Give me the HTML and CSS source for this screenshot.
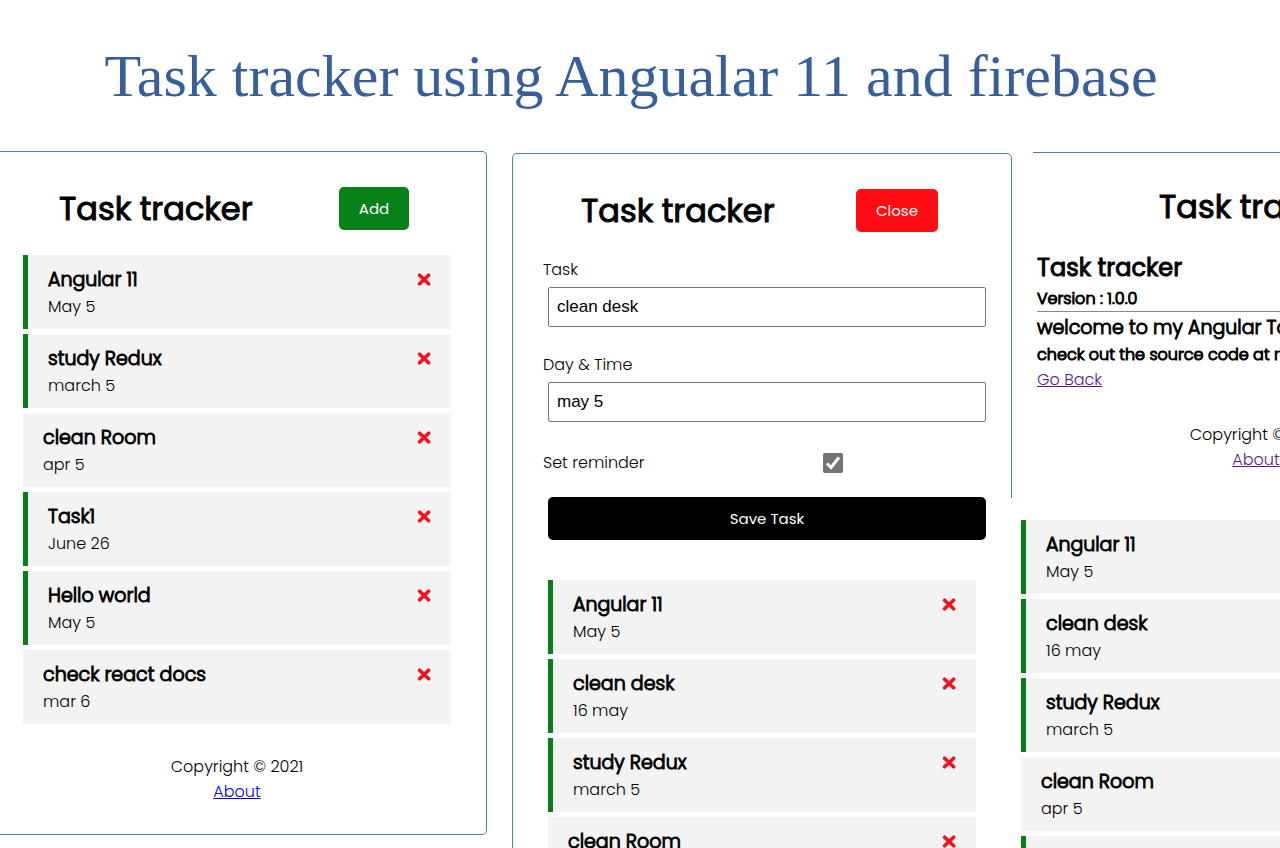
FILE: index.html
```html
<!DOCTYPE html>
<html lang="en">
<head>
<meta charset="utf-8">
<meta name="viewport" content="width=device-width, initial-scale=1">
<title>Task tracker using Angualar 11 and firebase</title>
<link rel="stylesheet" href="styles.css">
</head>
<body>
<svg class="sprite" aria-hidden="true">
  <symbol id="times" viewBox="0 0 14 13"><path d="M2.600 2.200 11.600 10.800M11.600 2.200 2.600 10.800" fill="none" stroke="#f5101b" stroke-width="3.600" stroke-linecap="round"/></symbol>
</svg>
<h1 class="banner">Task tracker using Angualar 11 and firebase</h1>
<main class="screens">
  <section class="card card-list">
    <header class="card-header">
      <h2 class="title">Task tracker</h2>
      <button class="btn btn-add" type="button">Add</button>
    </header>
    <ul class="tasks">
      <li class="task reminder"><h3>Angular 11</h3><p>May 5</p><button class="delete" type="button" aria-label="Delete"><svg><use href="#times"/></svg></button></li>
      <li class="task reminder"><h3>study Redux</h3><p>march 5</p><button class="delete" type="button" aria-label="Delete"><svg><use href="#times"/></svg></button></li>
      <li class="task"><h3>clean Room</h3><p>apr 5</p><button class="delete" type="button" aria-label="Delete"><svg><use href="#times"/></svg></button></li>
      <li class="task reminder"><h3>Task1</h3><p>June 26</p><button class="delete" type="button" aria-label="Delete"><svg><use href="#times"/></svg></button></li>
      <li class="task reminder"><h3>Hello world</h3><p>May 5</p><button class="delete" type="button" aria-label="Delete"><svg><use href="#times"/></svg></button></li>
      <li class="task"><h3>check react docs</h3><p>mar 6</p><button class="delete" type="button" aria-label="Delete"><svg><use href="#times"/></svg></button></li>
    </ul>
    <footer class="footer"><p>Copyright © 2021</p><a href="#about">About</a></footer>
  </section>

  <section class="card card-form">
    <header class="card-header">
      <h2 class="title">Task tracker</h2>
      <button class="btn btn-close" type="button">Close</button>
    </header>
    <form class="form">
      <div class="field"><label for="task">Task</label><input id="task" type="text" value="clean desk"></div>
      <div class="field"><label for="day">Day &amp; Time</label><input id="day" type="text" value="may 5"></div>
      <div class="check-field"><label for="remind">Set reminder</label><span class="check"><input id="remind" type="checkbox" checked><svg viewBox="0 0 20 20" aria-hidden="true"><path d="M4 10.500 8 14.500 16 4.500" fill="none" stroke="#fff" stroke-width="3"/></svg></span></div>
      <button class="btn btn-save" type="button">Save Task</button>
    </form>
    <ul class="tasks">
      <li class="task reminder"><h3>Angular 11</h3><p>May 5</p><button class="delete" type="button" aria-label="Delete"><svg><use href="#times"/></svg></button></li>
      <li class="task reminder"><h3>clean desk</h3><p>16 may</p><button class="delete" type="button" aria-label="Delete"><svg><use href="#times"/></svg></button></li>
      <li class="task reminder"><h3>study Redux</h3><p>march 5</p><button class="delete" type="button" aria-label="Delete"><svg><use href="#times"/></svg></button></li>
      <li class="task"><h3>clean Room</h3><p>apr 5</p><button class="delete" type="button" aria-label="Delete"><svg><use href="#times"/></svg></button></li>
    </ul>
  </section>

  <div class="side">
    <section class="about">
      <h2 class="title">Task tracker</h2>
      <div class="about-text">
        <h3 class="about-name">Task tracker</h3>
        <h5>Version : 1.0.0</h5>
        <hr>
        <h4>welcome to my Angular Task tracker</h4>
        <h5>check out the source code at my github</h5>
        <a class="visited" href="#back">Go Back</a>
      </div>
      <footer class="footer"><p>Copyright © 2021</p><a class="visited" href="#about">About</a></footer>
    </section>
    <section class="more">
      <ul class="tasks">
        <li class="task reminder"><h3>Angular 11</h3><p>May 5</p></li>
        <li class="task reminder"><h3>clean desk</h3><p>16 may</p></li>
        <li class="task reminder"><h3>study Redux</h3><p>march 5</p></li>
        <li class="task"><h3>clean Room</h3><p>apr 5</p></li>
        <li class="task reminder"><h3>Task1</h3><p>June 26</p></li>
      </ul>
    </section>
  </div>
</main>
</body>
</html>
```
FILE: styles.css
```css
* { box-sizing: border-box; margin: 0; padding: 0; }
body {
  height: 100vh;
  overflow: hidden;
  background: #fff;
  color: #000;
  font: 16px/25px Poppins, Inter, sans-serif;
  font-weight: 300;
}
.sprite { position: absolute; width: 0; height: 0; }
.banner {
  padding: 41px 18px 40px 0;
  color: #365f9b;
  font: 60px/70px "Liberation Serif", serif;
  text-align: center;
  white-space: nowrap;
}
.screens {
  display: grid;
  grid-template-columns: 487fr 25fr 500fr 268fr;
  align-items: start;
}
.card { border: 1px solid #4a7fa8; border-radius: 5px; }
.card-list { border-left: 0; border-radius: 0 5px 5px 0; padding: 35px 35px 30px 23px; }
.card-form { grid-column: 3; margin-top: 2px; padding: 35px 25px 30px 30px; }
.card-header { display: flex; align-items: center; justify-content: space-between; height: 43px; }
.card-list .card-header { padding: 0 42px 0 36px; margin-bottom: 25px; }
.card-form .card-header { padding: 0 48px 0 38px; margin-bottom: 25px; }
.title, .task h3, .about-name, .about h4, .about h5 {
  font-weight: 300;
  -webkit-text-stroke: 1px #000;
}
.title, .about-name { font-weight: 400; }
.title { font-size: 32px; line-height: 48px; }
.btn {
  height: 43px;
  border: 0;
  border-radius: 5px;
  color: #fff;
  font: inherit;
  font-weight: 400;
  font-size: 15px;
}
.btn-add { width: 70px; background: #088018; }
.btn-close { width: 82px; background: #ff0c15; }
.btn-save { display: block; width: calc(100% - 5px); margin-left: 5px; background: #000; }

.tasks { list-style: none; display: grid; gap: 5px; }
.task { position: relative; padding: 10px 20px; background: #f3f3f3; }
.reminder { border-left: 5px solid #088018; }
.task h3 { font-size: 19px; line-height: 29px; }
.delete {
  position: absolute;
  top: 18px;
  right: 20px;
  width: 14px;
  height: 13px;
  border: 0;
  background: none;
}
.delete svg { display: block; width: 14px; height: 13px; }
.card-form .tasks { margin: 40px 10px 0 5px; }

.field { margin-bottom: 25px; }
.field label { display: block; margin-bottom: 5px; }
.field input {
  display: block;
  width: calc(100% - 5px);
  height: 40px;
  margin-left: 5px;
  padding: 0 8px;
  border: 1px solid #767676;
  border-radius: 2px;
  color: #000;
  font: 17px "Liberation Sans", sans-serif;
}
.check-field {
  display: grid;
  grid-template-columns: 1fr 2fr;
  align-items: center;
  margin: 28px 0 22px;
  padding-right: 8px;
}
.check { display: grid; justify-self: center; width: 20px; height: 20px; }
.check input, .check svg { grid-area: 1 / 1; width: 20px; height: 20px; }
.check input { appearance: none; border-radius: 2px; background: #747474; }
.check svg { pointer-events: none; z-index: 1; }

.footer { margin-top: 30px; text-align: center; }
a { color: #0000ee; }
.visited { color: #551a8b; }

.side { min-width: 0; overflow: hidden; margin-left: -1px; padding-top: 1px; }
.about { width: 460px; margin-left: 22px; padding: 30px 0 26px 4px; border-top: 1px solid #4a7fa8; }
.about .title { padding-left: 122px; }
.about-text { margin-top: 19px; white-space: nowrap; }
.about-name { font-size: 24px; line-height: 36px; }
.about h4 { font-size: 19px; line-height: 29px; }
.about h5 { font-size: 16px; line-height: 25px; }
.about hr { border: 0; border-top: 1px solid #8a8a8a; margin-bottom: 1px; }
.about .footer { width: 438px; }
.more { position: relative; background: #fff; padding: 22px 0 0 10px; }
```
